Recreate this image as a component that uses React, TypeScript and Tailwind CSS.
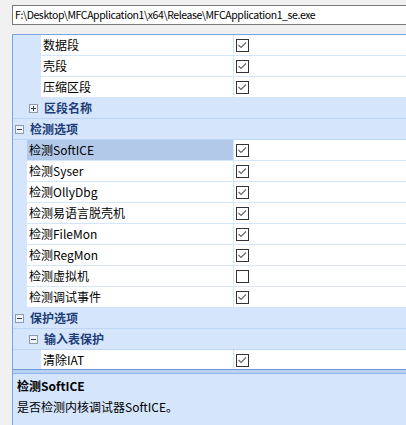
import React from "react";

const FONT = "font-['Noto_Sans_CJK_SC','Noto_Sans',sans-serif]";

type Row =
  | { kind: "cat"; level: number; label: string; open: boolean }
  | { kind: "item"; level: number; label: string; checked: boolean; selected?: boolean };

const ROWS: Row[] = [
  { kind: "item", level: 2, label: "数据段", checked: true },
  { kind: "item", level: 2, label: "壳段", checked: true },
  { kind: "item", level: 2, label: "压缩区段", checked: true },
  { kind: "cat", level: 1, label: "区段名称", open: false },
  { kind: "cat", level: 0, label: "检测选项", open: true },
  { kind: "item", level: 1, label: "检测SoftICE", checked: true, selected: true },
  { kind: "item", level: 1, label: "检测Syser", checked: true },
  { kind: "item", level: 1, label: "检测OllyDbg", checked: true },
  { kind: "item", level: 1, label: "检测易语言脱壳机", checked: true },
  { kind: "item", level: 1, label: "检测FileMon", checked: true },
  { kind: "item", level: 1, label: "检测RegMon", checked: true },
  { kind: "item", level: 1, label: "检测虚拟机", checked: false },
  { kind: "item", level: 1, label: "检测调试事件", checked: true },
  { kind: "cat", level: 0, label: "保护选项", open: true },
  { kind: "cat", level: 1, label: "输入表保护", open: true },
  { kind: "item", level: 2, label: "清除IAT", checked: true },
];

function ExpandBox({ open }: { open: boolean }) {
  return (
    <svg width="9" height="9" viewBox="0 0 9 9" className="shrink-0">
      <rect x="0.5" y="0.5" width="8" height="8" fill="#eef4fd" stroke="#8e9aab" />
      <line x1="2" y1="4.5" x2="7" y2="4.5" stroke="#3c3c3c" />
      {!open && <line x1="4.5" y1="2" x2="4.5" y2="7" stroke="#3c3c3c" />}
    </svg>
  );
}

function CheckBox({ checked }: { checked: boolean }) {
  return (
    <svg width="13" height="13" viewBox="0 0 13 13" className="shrink-0">
      <rect x="0.5" y="0.5" width="12" height="12" fill="#ffffff" stroke="#333333" />
      {checked && (
        <polyline
          points="2.5,6 5,8.5 10,3.5"
          fill="none"
          stroke="#666666"
          strokeWidth="1.2"
        />
      )}
    </svg>
  );
}

function GridRow({ row }: { row: Row }) {
  if (row.kind === "cat") {
    return (
      <div className="flex h-[21px] items-center bg-[#d5e5fb] border-b border-[#bcd5f5]">
        <div className={row.level === 0 ? "w-[2px] shrink-0" : "w-[16px] shrink-0"} />
        <ExpandBox open={row.open} />
        <span className="ml-[6px] text-[12px] font-bold text-[#1e3d78] leading-none">{row.label}</span>
      </div>
    );
  }
  const gutter = row.level === 2 ? "w-[28px]" : "w-[14px]";
  return (
    <div className="flex h-[21px] pb-[1px] bg-[#d5e5fb]">
      <div className={`${gutter} shrink-0`} />
      <div
        className={`flex flex-1 items-center pl-[2px] text-[12px] text-black leading-none ${
          row.selected ? "bg-[#b2c9e9]" : "bg-white"
        }`}
      >
        {row.label}
      </div>
      <div className="ml-[1px] flex w-[172px] shrink-0 items-center bg-white pl-[2px]">
        <CheckBox checked={row.checked} />
      </div>
    </div>
  );
}

export default function App() {
  return (
    <div className={`${FONT} relative h-[425px] w-[406px] overflow-hidden bg-[#f0f0f0] pl-[12px]`}>
      <div className="mt-[5px] flex h-[20px] items-center border border-r-0 border-[#7a7a7a] bg-white pl-[2px] text-[10.5px] tracking-[-0.4px] text-black whitespace-nowrap">
        {"F:\\Desktop\\MFCApplication1\\x64\\Release\\MFCApplication1_se.exe"}
      </div>
      <div className="mt-[9px] flex h-[391px] flex-col border-l border-t border-[#7aa2de] bg-[#d5e5fb]">
        <div className="h-[334px] shrink-0 overflow-hidden">
          {ROWS.map((r, i) => (
            <GridRow key={i} row={r} />
          ))}
        </div>
        <div className="h-[1px] shrink-0 bg-[#6f98d4]" />
        <div className="h-[3px] shrink-0 bg-[#b7d1f3]" />
        <div className="h-[1px] shrink-0 bg-[#92b5e8]" />
        <div className="flex flex-1 flex-col pl-[4px] pt-[2px] text-[12px] text-black">
          <div className="font-bold leading-[20px]">检测SoftICE</div>
          <div className="leading-[20px] mt-[1px]">是否检测内核调试器SoftICE。</div>
        </div>
      </div>
    </div>
  );
}
